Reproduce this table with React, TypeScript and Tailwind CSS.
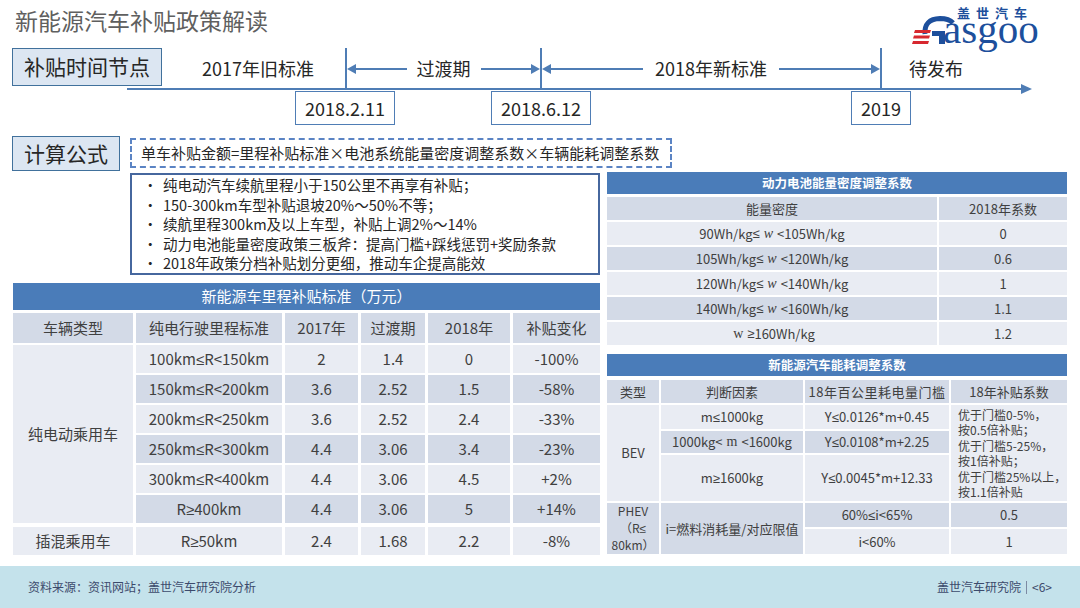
import React from "react";

const LIGHT = "bg-[#e9ecf3]";
const DARK = "bg-[#d3dae7]";

function sym(s: string): React.ReactNode {
  const parts = s.split(/([≤≥])/);
  return parts.map((p, i) =>
    p === "≤" || p === "≥" ? (
      <span key={i} className="font-['Noto_Sans','Liberation_Sans',sans-serif]">
        {p}
      </span>
    ) : (
      <React.Fragment key={i}>{p}</React.Fragment>
    )
  );
}

function Arrow({ dir }: { dir: "left" | "right" }) {
  return (
    <div className="flex flex-1 items-center">
      {dir === "left" && (
        <svg width="9" height="10" viewBox="0 0 9 10" className="shrink-0">
          <path d="M0 5 L9 0 L9 10 Z" fill="#4f7db5" />
        </svg>
      )}
      <div className="h-[2px] flex-1 bg-[#4f7db5]" />
      {dir === "right" && (
        <svg width="9" height="10" viewBox="0 0 9 10" className="shrink-0">
          <path d="M9 5 L0 0 L0 10 Z" fill="#4f7db5" />
        </svg>
      )}
    </div>
  );
}

function Logo() {
  return (
    <svg width="136" height="48" viewBox="0 0 136 48" overflow="visible" className="mr-[32px]">
      <text x="45" y="18" fontSize="13" fontWeight="700" fill="#1d4f9c" letterSpacing="6" fontFamily="'Noto Sans CJK SC', sans-serif">
        盖世汽车
      </text>
      <path d="M13 34 Q12 19 28 18.5 Q37 18.5 41 23" stroke="#1d4f9c" strokeWidth="5" fill="none" />
      <polygon points="3,30 19,30 18,33 2,33" fill="#d7282f" />
      <polygon points="2,35.5 18,35.5 17,38.5 1,38.5" fill="#d7282f" />
      <polygon points="1,41 17,41 16,44 0,44" fill="#d7282f" />
      <path d="M20 31 H33 V44 H27 V36 H20 Z" fill="#1d4f9c" />
      <text x="31" y="43" fontSize="41" fill="#1d4f9c" fontFamily="'Liberation Serif', serif">
        asgoo
      </text>
    </svg>
  );
}

function Header() {
  return (
    <div className="flex h-[48px] items-start justify-between">
      <div className="pl-[15px] pt-[5px] text-[23px] leading-[30px] text-[#5f5f5f]">新能源汽车补贴政策解读</div>
      <Logo />
    </div>
  );
}

function Timeline() {
  return (
    <div className="flex h-[80px] flex-col">
      <div className="flex h-[41px]">
        <div className="w-[12px]" />
        <div className="flex h-[38px] w-[150px] items-center justify-center border border-[#41719c] bg-[#dce6f2] text-[21px] text-[#262626]">
          补贴时间节点
        </div>
        <div className="flex w-[183px] items-center justify-center pl-[9px] text-[18px]">2017年旧标准</div>
        <div className="flex w-[195px] items-center border-l-2 border-[#4f7db5]">
          <Arrow dir="left" />
          <span className="mx-[10px] text-[18px]">过渡期</span>
          <Arrow dir="right" />
        </div>
        <div className="flex w-[340px] items-center border-l-2 border-[#4f7db5]">
          <Arrow dir="left" />
          <span className="mx-[12px] text-[18px]">2018年新标准</span>
          <Arrow dir="right" />
        </div>
        <div className="flex items-center border-l-2 border-[#4f7db5] pl-[27px] text-[18px]">待发布</div>
      </div>
      <div className="-mt-[5px] ml-[127px] flex h-[10px] w-[905px] items-center">
        <div className="h-[2px] flex-1 bg-[#4f7db5]" />
        <svg width="11" height="10" viewBox="0 0 11 10" className="shrink-0">
          <path d="M11 5 L0 0 L0 10 Z" fill="#4f7db5" />
        </svg>
      </div>
      <div className="-mt-[3px] flex h-[34px] text-[18px]">
        <div className="ml-[295px] flex w-[100px] items-center justify-center border-[1.5px] border-[#4f7db5] bg-white">2018.2.11</div>
        <div className="ml-[96px] flex w-[100px] items-center justify-center border-[1.5px] border-[#4f7db5] bg-white">2018.6.12</div>
        <div className="ml-[260px] flex w-[60px] items-center justify-center border-[1.5px] border-[#4f7db5] bg-white">2019</div>
      </div>
    </div>
  );
}

function Formula() {
  return (
    <div className="mt-[8px] flex items-start">
      <div className="ml-[12px] flex h-[35px] w-[108px] items-center justify-center border border-[#41719c] bg-[#dce6f2] text-[21px]">
        计算公式
      </div>
      <div className="ml-[10px] mt-[2px] flex h-[30px] w-[542px] items-center border-2 border-dashed border-[#5b84c4] pl-[9px] text-[15px] text-[#262626]">
        单车补贴金额=里程补贴标准×电池系统能量密度调整系数×车辆能耗调整系数
      </div>
    </div>
  );
}

const bullets = [
  "纯电动汽车续航里程小于150公里不再享有补贴；",
  "150-300km车型补贴退坡20%～50%不等；",
  "续航里程300km及以上车型，补贴上调2%～14%",
  "动力电池能量密度政策三板斧：提高门槛+踩线惩罚+奖励条款",
  "2018年政策分档补贴划分更细，推动车企提高能效",
];

function Bullets() {
  return (
    <div className="ml-[117px] mt-[2px] flex h-[102px] w-[470px] flex-col justify-center border-2 border-[#46679e] pl-[11px]">
      {bullets.map((b) => (
        <div key={b} className="flex text-[14.5px] leading-[19.4px] text-[#262626]">
          <span className="w-[20px]">•</span>
          <span>{b}</span>
        </div>
      ))}
    </div>
  );
}

const mileRows = [
  ["100km≤R<150km", "2", "1.4", "0", "-100%"],
  ["150km≤R<200km", "3.6", "2.52", "1.5", "-58%"],
  ["200km≤R<250km", "3.6", "2.52", "2.4", "-33%"],
  ["250km≤R<300km", "4.4", "3.06", "3.4", "-23%"],
  ["300km≤R<400km", "4.4", "3.06", "4.5", "+2%"],
  ["R≥400km", "4.4", "3.06", "5", "+14%"],
];

function Cell({ children, className = "" }: { children?: React.ReactNode; className?: string }) {
  return <div className={`flex items-center justify-center text-center ${className}`}>{children}</div>;
}

function MileTable() {
  const head = ["车辆类型", "纯电行驶里程标准", "2017年", "过渡期", "2018年", "补贴变化"];
  return (
    <div className="mt-[8px] flex flex-col">
      <div className="flex h-[27px] items-center justify-center bg-[#4a7cb9] text-[15px] text-white">新能源车里程补贴标准（万元）</div>
      <div className="mt-[3px] grid grid-cols-[120px_146px_73px_64px_82px_87px] grid-rows-[30px_28px_28px_28px_28px_28px_28px_30px] gap-x-[3px] gap-y-[2px] text-[15px] text-[#404040]">
        {head.map((h) => (
          <Cell key={h} className={DARK}>
            {h}
          </Cell>
        ))}
        <Cell className={`row-span-6 ${LIGHT}`}>纯电动乘用车</Cell>
        {mileRows.map((r, i) =>
          r.map((c, j) => (
            <Cell key={`${i}-${j}`} className={i % 2 === 0 ? LIGHT : DARK}>
              {sym(c)}
            </Cell>
          ))
        )}
        {["插混乘用车", "R≥50km", "2.4", "1.68", "2.2", "-8%"].map((c) => (
          <Cell key={c} className={`mt-[2px] ${LIGHT}`}>
            {sym(c)}
          </Cell>
        ))}
      </div>
    </div>
  );
}

function W({ italic = true }: { italic?: boolean }) {
  return (
    <span className={`mx-[4px] font-['Liberation_Serif',serif] text-[14px] ${italic ? "italic" : ""}`}>w</span>
  );
}

function DensityTable() {
  const rows: [React.ReactNode, string][] = [
    [<>90Wh/kg{sym("≤")}<W />&lt;105Wh/kg</>, "0"],
    [<>105Wh/kg{sym("≤")}<W />&lt;120Wh/kg</>, "0.6"],
    [<>120Wh/kg{sym("≤")}<W />&lt;140Wh/kg</>, "1"],
    [<>140Wh/kg{sym("≤")}<W />&lt;160Wh/kg</>, "1.1"],
    [<><W italic={false} />{sym("≥")}160Wh/kg</>, "1.2"],
  ];
  return (
    <div className="flex flex-col">
      <div className="flex h-[22px] items-center justify-center bg-[#4a7cb9] text-[12.5px] font-bold text-white">动力电池能量密度调整系数</div>
      <div className="mt-[3px] grid grid-cols-[330px_128px] grid-rows-[23px_23px_23px_23px_23px_23px] gap-[2px] text-[13px] text-[#404040]">
        <Cell className={DARK}>能量密度</Cell>
        <Cell className={DARK}>2018年系数</Cell>
        {rows.map(([a, b], i) => (
          <React.Fragment key={i}>
            <Cell className={i % 2 === 0 ? LIGHT : DARK}>{a}</Cell>
            <Cell className={i % 2 === 0 ? LIGHT : DARK}>{b}</Cell>
          </React.Fragment>
        ))}
      </div>
    </div>
  );
}

function EnergyTable() {
  return (
    <div className="mt-[9px] flex flex-col">
      <div className="flex h-[22px] items-center justify-center bg-[#4a7cb9] text-[12.5px] font-bold text-white">新能源汽车能耗调整系数</div>
      <div className="mt-[4px] grid grid-cols-[52px_142px_144px_116px] grid-rows-[23px_24px_22px_46px_24px_25px] gap-[2px] text-[13px] leading-[14px] text-[#404040]">
        <Cell className={DARK}>类型</Cell>
        <Cell className={DARK}>判断因素</Cell>
        <Cell className={`${DARK} tracking-[0.5px]`}>18年百公里耗电量门槛</Cell>
        <Cell className={DARK}>18年补贴系数</Cell>

        <Cell className={`row-span-3 ${LIGHT}`}>BEV</Cell>
        <Cell className={LIGHT}>{sym("m≤1000kg")}</Cell>
        <Cell className={LIGHT}>{sym("Y≤0.0126*m+0.45")}</Cell>
        <div className={`row-span-3 flex flex-col justify-center whitespace-nowrap pl-[7px] text-[12px] leading-[15.5px] ${LIGHT}`}>
          <span>优于门槛0-5%，</span>
          <span>按0.5倍补贴；</span>
          <span>优于门槛5-25%，</span>
          <span>按1倍补贴；</span>
          <span>优于门槛25%以上，</span>
          <span>按1.1倍补贴</span>
        </div>
        <Cell className={DARK}>
          1000kg&lt;<span className="mx-[4px] font-['Liberation_Serif',serif] text-[14px]">m</span>&lt;1600kg
        </Cell>
        <Cell className={DARK}>{sym("Y≤0.0108*m+2.25")}</Cell>
        <Cell className={LIGHT}>{sym("m≥1600kg")}</Cell>
        <Cell className={LIGHT}>{sym("Y≤0.0045*m+12.33")}</Cell>

        <Cell className={`row-span-2 flex-col text-[12px] leading-[16.5px] ${DARK}`}>
          <span>PHEV</span>
          <span>（R{sym("≤")}</span>
          <span>80km）</span>
        </Cell>
        <Cell className={`row-span-2 ${DARK}`}>i=燃料消耗量/对应限值</Cell>
        <Cell className={DARK}>60%{sym("≤")}i&lt;65%</Cell>
        <Cell className={DARK}>0.5</Cell>
        <Cell className={LIGHT}>i&lt;60%</Cell>
        <Cell className={LIGHT}>1</Cell>
      </div>
    </div>
  );
}

function Body() {
  return (
    <div className="flex">
      <div className="ml-[13px] flex w-[587px] flex-col">
        <Bullets />
        <MileTable />
      </div>
      <div className="ml-[7px] mt-[1px] flex w-[460px] flex-col">
        <DensityTable />
        <EnergyTable />
      </div>
    </div>
  );
}

function Footer() {
  return (
    <div className="mt-auto flex h-[42px] items-center justify-between bg-[#c4e2eb] px-[28px] text-[12px] text-[#3c4a6b]">
      <span>资料来源：资讯网站；盖世汽车研究院分析</span>
      <span className="flex items-center">
        盖世汽车研究院<span className="mx-[5px] h-[13px] w-px bg-[#7c8aa3]" />&lt;6&gt;
      </span>
    </div>
  );
}

export default function App() {
  return (
    <div className="relative flex h-[608px] w-[1080px] flex-col overflow-hidden bg-white font-['Noto_Sans_CJK_SC','Noto_Sans',sans-serif] text-[#262626]">
      <Header />
      <Timeline />
      <Formula />
      <Body />
      <Footer />
    </div>
  );
}
